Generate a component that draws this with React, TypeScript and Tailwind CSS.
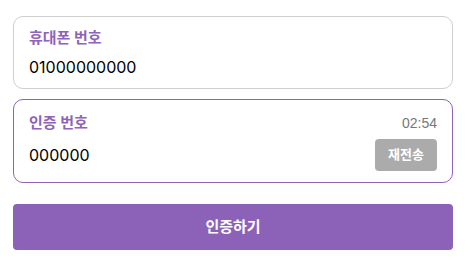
export default function App() {
  return (
    <div className="min-h-screen bg-white pl-[13px] pr-[16px] pt-[16px] font-['Inter','Noto_Sans_CJK_KR',sans-serif]">
      {/* 휴대폰 번호 */}
      <div className="h-[73px] rounded-[10px] border border-[#cfcfcf] px-[15px] pt-[11px]">
        <div className="text-[15px] font-bold leading-[20px] text-[#8e63b9]">휴대폰 번호</div>
        <div className="mt-[8px] text-[16px] leading-[22px] text-black">01000000000</div>
      </div>

      {/* 인증 번호 */}
      <div className="mt-[10px] h-[84px] rounded-[10px] border border-[#8e63b9] pl-[15px] pr-[15px] pt-[11px]">
        <div className="flex items-center justify-between">
          <span className="text-[15px] font-bold leading-[20px] text-[#8e63b9]">인증 번호</span>
          <span className="mt-[2px] font-['Liberation_Sans',sans-serif] text-[14px] text-[#777]">02:54</span>
        </div>
        <div className="mt-[5px] flex items-center justify-between">
          <span className="text-[16px] leading-[22px] text-black">000000</span>
          <button className="h-[32px] w-[62px] rounded-[4px] bg-[#ababab] text-[13px] font-bold text-white">
            재전송
          </button>
        </div>
      </div>

      <button className="mt-[21px] h-[46px] w-full rounded-[4px] bg-[#8c62b9] text-[15px] font-bold text-white">
        인증하기
      </button>
    </div>
  );
}
